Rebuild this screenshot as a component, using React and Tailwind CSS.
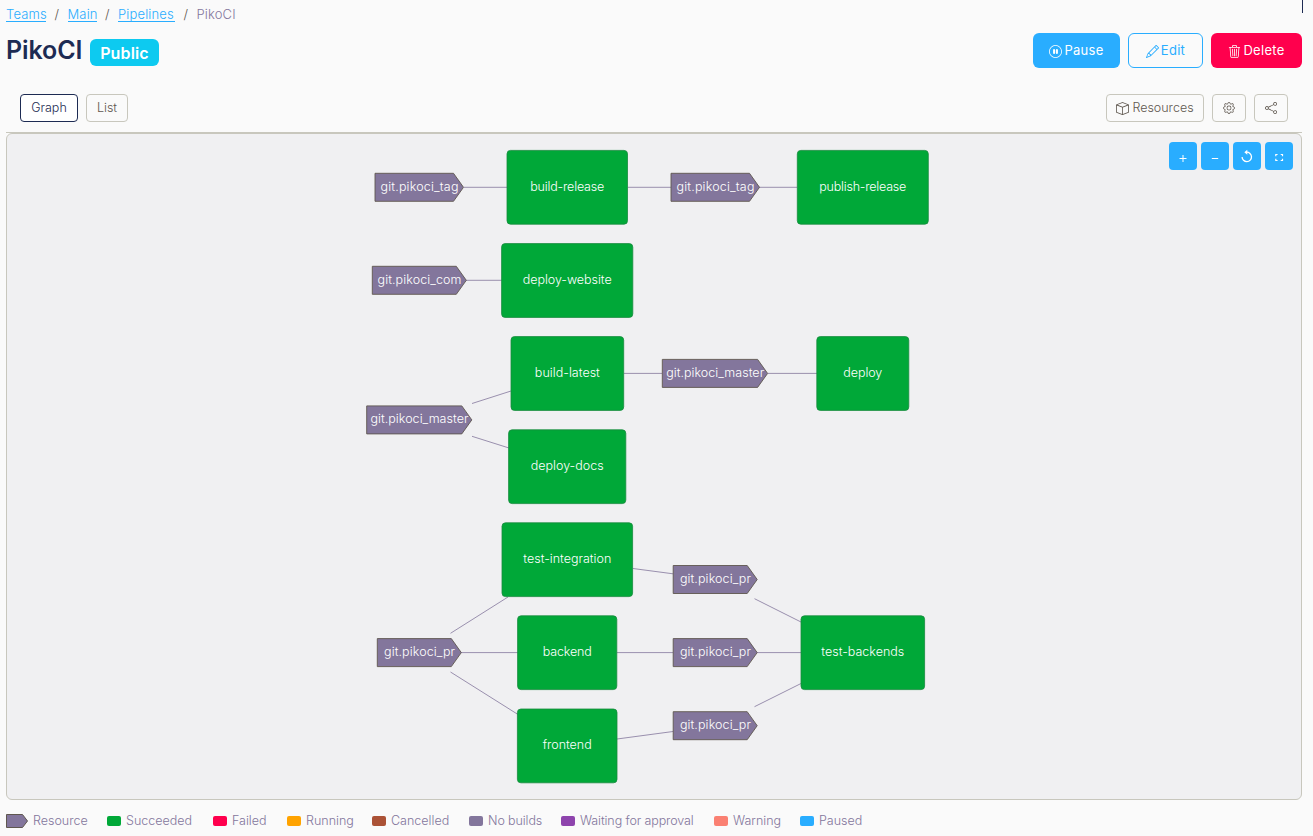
import React from 'react';
import { BsPauseCircle, BsPencil, BsTrash3, BsBox, BsGear, BsShare } from 'react-icons/bs';

const crumbs = [
  { label: 'Teams', className: 'w-10' },
  { label: 'Main', className: 'w-[29px]' },
  { label: 'Pipelines', className: 'w-[57px]' },
];

// x, y, width of each job box, then label and label width
const jobs = [
  { x: 507, y: 150, w: 120.5, label: 'build-release', len: 74 },
  { x: 797.3, y: 150, w: 131, label: 'publish-release', len: 87 },
  { x: 501.6, y: 243.2, w: 131.2, label: 'deploy-website', len: 89 },
  { x: 511, y: 336.2, w: 112.7, label: 'build-latest', len: 65 },
  { x: 816.8, y: 336.2, w: 92, label: 'deploy', len: 39 },
  { x: 508.6, y: 429.4, w: 117.2, label: 'deploy-docs', len: 73 },
  { x: 502, y: 522.4, w: 130.6, label: 'test-integration', len: 88 },
  { x: 517.6, y: 615.4, w: 99.2, label: 'backend', len: 49 },
  { x: 801, y: 615.4, w: 123.6, label: 'test-backends', len: 83 },
  { x: 517.4, y: 708.6, w: 99.6, label: 'frontend', len: 49 },
];

const resources = [
  { x: 375, y: 187.3, w: 88.5, label: 'git.pikoci_tag', len: 78 },
  { x: 671, y: 187.3, w: 88.5, label: 'git.pikoci_tag', len: 78 },
  { x: 372.3, y: 280.3, w: 94, label: 'git.pikoci_com', len: 84 },
  { x: 662.3, y: 373.4, w: 105.3, label: 'git.pikoci_master', len: 98 },
  { x: 366.7, y: 419.9, w: 105.1, label: 'git.pikoci_master', len: 98 },
  { x: 377.3, y: 652.6, w: 84, label: 'git.pikoci_pr', len: 71 },
  { x: 673.2, y: 579.5, w: 84, label: 'git.pikoci_pr', len: 71 },
  { x: 673.2, y: 652.6, w: 84, label: 'git.pikoci_pr', len: 71 },
  { x: 673.2, y: 725.7, w: 84, label: 'git.pikoci_pr', len: 71 },
];

const edges = [
  [464, 187.3, 507, 187.3],
  [628, 187.3, 671, 187.3],
  [759, 187.3, 797, 187.3],
  [466, 280.3, 502, 280.3],
  [624, 373.4, 662, 373.4],
  [768, 373.4, 817, 373.4],
  [472, 403.5, 511, 391],
  [472, 436.3, 509, 448],
  [450.5, 633.3, 508, 597],
  [461, 652.6, 518, 652.6],
  [450.5, 672, 518, 714.5],
  [633, 568.5, 673, 573.8],
  [617, 652.6, 673, 652.6],
  [617, 739, 673, 731.5],
  [754.5, 598.7, 801, 622],
  [757, 652.6, 801, 652.6],
  [754.5, 706.7, 801, 683.5],
];

const legend = [
  { label: 'Succeeded', color: 'bg-[#00a838]', width: 'w-[106px]' },
  { label: 'Failed', color: 'bg-[#ff004d]', width: 'w-[74px]' },
  { label: 'Running', color: 'bg-[#ffa300]', width: 'w-[85px]' },
  { label: 'Cancelled', color: 'bg-[#ab5236]', width: 'w-[97px]' },
  { label: 'No builds', color: 'bg-[#83769c]', width: 'w-[92px] tracking-[-0.1px]' },
  { label: 'Waiting for approval', color: 'bg-[#8e44ad]', width: 'w-[153px] tracking-[-0.1px]' },
  { label: 'Warning', color: 'bg-[#fa8072]', width: 'w-[86px]' },
  { label: 'Paused', color: 'bg-[#29adff]', width: 'w-[62px]' },
];

const Breadcrumb = () => (
  <nav className="-mr-px flex h-[29px] items-center text-[13px] font-light tracking-[0.15px]">
    {crumbs.map((c) => (
      <React.Fragment key={c.label}>
        <a
          href="#"
          className={`${c.className} whitespace-nowrap border-b border-[#29adff] leading-[14px] text-[#29adff]`}
        >
          {c.label}
        </a>
        <span className="w-[21.5px] text-center text-[#5f574f]">/</span>
      </React.Fragment>
    ))}
    <span className="text-[#83769c]">PikoCI</span>
    <span className="ml-auto h-[13px] w-px self-start bg-[#1d2b53]" />
  </nav>
);

const Header = () => (
  <header className="flex h-[43px] items-start justify-between pt-1">
    <div className="flex">
      <h1 className="w-[84px] text-[25px] leading-[35px] font-semibold tracking-[-0.1px] text-[#1d2b53]">PikoCI</h1>
      <span className="mt-[6px] flex h-[27px] w-[69px] items-center justify-center rounded-md bg-[#0dcaf0] text-[16px] font-semibold tracking-[0.15px] text-white">
        Public
      </span>
    </div>
    <div className="flex gap-2 text-[13px] tracking-[0.3px]">
      <button className="flex h-[35px] w-[87px] items-center justify-center gap-[2px] rounded-md bg-[#29adff] pt-px text-white">
        <BsPauseCircle size={13} /> Pause
      </button>
      <button className="flex h-[35px] w-[75px] items-center justify-center gap-[2px] rounded-md border border-[#29adff] pt-px text-[#29adff]">
        <BsPencil size={13} /> Edit
      </button>
      <button className="flex h-[35px] w-[91px] items-center justify-center gap-[2px] rounded-md bg-[#ff004d] pt-px text-white">
        <BsTrash3 size={13} /> Delete
      </button>
    </div>
  </header>
);

const Toolbar = () => (
  <div className="mt-[22px] flex h-[39px] justify-between border-b border-[#c8c7bd] px-[14px] text-[12.5px] font-light text-[#5f574f]">
    <div className="flex gap-2">
      <button className="h-7 w-[58px] rounded border border-[#1d2b53] bg-white text-[#1d2b53]">Graph</button>
      <button className="h-7 w-[42px] rounded border border-[#c8c7bd]">List</button>
    </div>
    <div className="flex gap-2">
      <button className="flex h-7 w-[98px] items-center justify-center gap-[3px] rounded border border-[#c8c7bd]">
        <BsBox size={13} /> Resources
      </button>
      <button className="flex h-7 w-[34px] items-center justify-center rounded border border-[#c8c7bd]">
        <BsGear size={12} />
      </button>
      <button className="flex h-7 w-[34px] items-center justify-center rounded border border-[#c8c7bd]">
        <BsShare size={12} />
      </button>
    </div>
  </div>
);

const controls = [
  { name: 'in', icon: <path d="M10.5 16.5h7M14 13v7" strokeWidth="1" /> },
  { name: 'out', icon: <path d="M10.8 16.5h6.4" strokeWidth="1" /> },
  {
    name: 'reset',
    icon: (
      <>
        <path d="M13.5 10.2a4.7 4.7 0 1 1-4.4 4.7" strokeWidth="1.3" />
        <path d="M11.3 10.2l3-2.5v5z" fill="white" stroke="none" />
      </>
    ),
  },
  { name: 'full', icon: <path d="M10.8 14.2v-1.7h1.8M15.7 12.5h1.8v1.7M17.5 16.8v1.7h-1.8M12.6 18.5h-1.8v-1.7" strokeWidth="1.2" /> },
];

const Graph = () => (
  <svg
    width="1294"
    height="665"
    viewBox="7 134 1294 665"
    fontFamily="Inter, sans-serif"
    fontSize="12.5"
    fontWeight="300"
    textAnchor="middle"
    fill="white"
  >
    {edges.map(([x1, y1, x2, y2], i) => (
      <line key={i} x1={x1} y1={y1} x2={x2} y2={y2} stroke="#83769c" strokeWidth="0.8" />
    ))}
    {jobs.map((j) => (
      <g key={j.label}>
        <rect x={j.x} y={j.y + 0.4} width={j.w} height="73.8" rx="3.5" fill="#00a838" stroke="#168a3e" strokeWidth="0.8" />
        <text x={j.x + j.w / 2} y={j.y + 40.5} textLength={j.len}>{j.label}</text>
      </g>
    ))}
    {resources.map((r, i) => (
      <g key={i}>
        <path
          d={`M${r.x} ${r.y - 14}h${r.w - 10}l10 14l-10 14h${10 - r.w}z`}
          fill="#83769c"
          stroke="#5f574f"
          strokeWidth="0.9"
        />
        <text x={r.x + r.w / 2 + 0.2} y={r.y + 3.4} textLength={r.len}>{r.label}</text>
      </g>
    ))}
  </svg>
);

const Legend = () => (
  <footer className="flex h-9 items-center pt-[6px] text-[12.5px] font-light text-[#83769c]">
    <div className="flex w-[101px] items-center gap-[5px] whitespace-nowrap">
      <svg width="22" height="14" viewBox="0 0 22 14">
        <path d="M.5 .5h16l5 6.5l-5 6.5h-16z" fill="#83769c" stroke="#5f574f" />
      </svg>
      Resource
    </div>
    {legend.map((l) => (
      <div key={l.label} className={`${l.width} flex items-center gap-[5px] whitespace-nowrap`}>
        <span className={`${l.color} h-[10px] w-[14px] shrink-0 rounded-[2px]`} />
        {l.label}
      </div>
    ))}
  </footer>
);

const App = () => (
  <div className="h-[836px] w-[1313px] overflow-hidden bg-[#fafafa] pr-[11px] pl-[6px] font-['Inter',sans-serif]">
    <Breadcrumb />
    <Header />
    <Toolbar />
    <main className="relative h-[667px] rounded-md border border-[#c8c7bd] bg-[#f0f0f2]">
      <Graph />
      <div className="absolute top-2 right-2 flex gap-1">
        {controls.map((c) => (
          <button key={c.name} className="h-7 w-7 rounded bg-[#29adff]">
            <svg width="28" height="28" fill="none" stroke="white">{c.icon}</svg>
          </button>
        ))}
      </div>
    </main>
    <Legend />
  </div>
);

export default App;
